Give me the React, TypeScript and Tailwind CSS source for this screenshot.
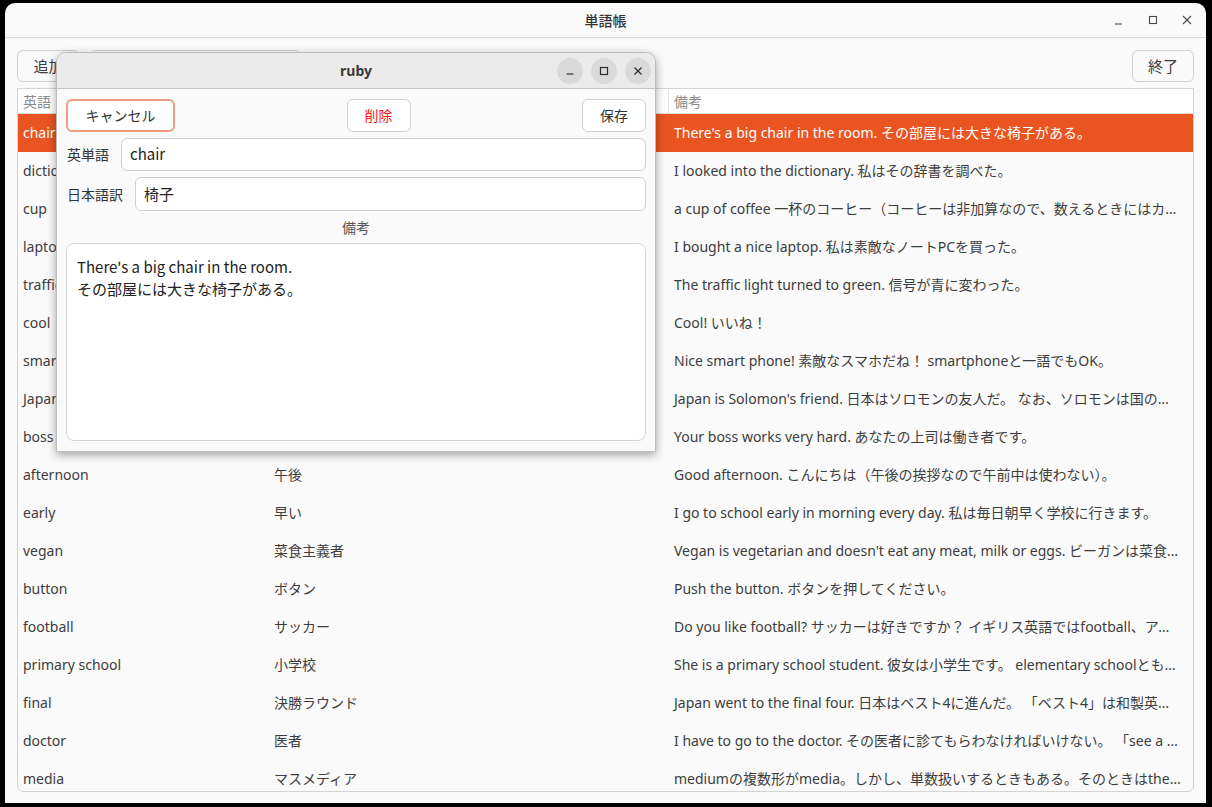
import React from 'react';

const rows: [string, string, string][] = [
  ['chair', '椅子', "There's a big chair in the room. その部屋には大きな椅子がある。"],
  ['dictionary', '辞書', 'I looked into the dictionary. 私はその辞書を調べた。'],
  ['cup', 'カップ', 'a cup of coffee 一杯のコーヒー（コーヒーは非加算なので、数えるときにはカップで数える）'],
  ['laptop', 'ノートPC', 'I bought a nice laptop. 私は素敵なノートPCを買った。'],
  ['traffic light', '信号', 'The traffic light turned to green. 信号が青に変わった。'],
  ['cool', 'かっこいい', 'Cool! いいね！'],
  ['smartphone', 'スマートフォン', 'Nice smart phone! 素敵なスマホだね！ smartphoneと一語でもOK。'],
  ['Japan', '日本', "Japan is Solomon's friend. 日本はソロモンの友人だ。 なお、ソロモンは国の名前でもある。"],
  ['boss', '上司', 'Your boss works very hard. あなたの上司は働き者です。'],
  ['afternoon', '午後', 'Good afternoon. こんにちは（午後の挨拶なので午前中は使わない）。'],
  ['early', '早い', 'I go to school early in morning every day. 私は毎日朝早く学校に行きます。'],
  ['vegan', '菜食主義者', "Vegan is vegetarian and doesn't eat any meat, milk or eggs. ビーガンは菜食主義者で肉も乳製品も食べない。"],
  ['button', 'ボタン', 'Push the button. ボタンを押してください。'],
  ['football', 'サッカー', 'Do you like football? サッカーは好きですか？ イギリス英語ではfootball、アメリカ英語ではsoccer。'],
  ['primary school', '小学校', 'She is a primary school student. 彼女は小学生です。 elementary schoolとも言う。'],
  ['final', '決勝ラウンド', 'Japan went to the final four. 日本はベスト4に進んだ。 「ベスト4」は和製英語。'],
  ['doctor', '医者', 'I have to go to the doctor. その医者に診てもらわなければいけない。 「see a doctor」とも言う。'],
  ['media', 'マスメディア', 'mediumの複数形がmedia。しかし、単数扱いするときもある。そのときはthe mediaとする。'],
];

const font = { fontFamily: '"Noto Sans", "Noto Sans CJK JP", sans-serif' };
const jpFont = { fontFamily: '"Noto Sans CJK JP", "Noto Sans", sans-serif' };

export default function App() {
  return (
    <div className="w-[1212px] h-[807px] bg-black relative overflow-hidden" style={font}>
      {/* ─── Main window ─── */}
      <div className="ml-[5px] mt-[3px] w-[1201px] h-[800px] rounded-t-[10px] bg-[#fafafa] flex flex-col text-[#3d3d3d]">
        <div className="h-[35px] shrink-0 border-b border-[#d8d8d8] grid grid-cols-[1fr_auto_1fr] items-center">
          <div />
          <div className="text-[14px] font-medium text-[#333]" style={jpFont}>単語帳</div>
          <div className="flex justify-end items-center gap-[18px] pr-[11px]">
            <WinIcon kind="min" />
            <WinIcon kind="max" />
            <WinIcon kind="close" />
          </div>
        </div>

        <div className="flex items-center px-[12px] pt-[12px] gap-[10px]">
          <Btn className="w-[63px]">追加</Btn>
          <div className="w-[211px] h-[32px] rounded-[6px] border border-[#d0d0d0] bg-white" />
          <div className="flex-1" />
          <Btn className="w-[62px]">終了</Btn>
        </div>

        <div className="mx-[12px] mt-[6px] mb-[11px] flex-1 min-h-0 border border-[#d4d4d4] rounded-b-[6px] bg-[#fafafa] overflow-hidden flex flex-col">
          <div className="h-[25px] shrink-0 grid grid-cols-[251px_400px_1fr] bg-white border-b border-[#dcdcdc] text-[14px] text-[#8c8c8c]">
            <div className="px-[5px] flex items-center border-r border-[#e2e2e2]" style={jpFont}>英語</div>
            <div className="px-[5px] flex items-center border-r border-[#e2e2e2]" style={jpFont}>日本語</div>
            <div className="px-[5px] flex items-center" style={jpFont}>備考</div>
          </div>
          {rows.map(([en, ja, note], i) => (
            <div
              key={en}
              className={`h-[38px] shrink-0 grid grid-cols-[251px_400px_1fr] items-center pb-[2px] text-[14px] ${i === 0 ? 'bg-[#e95420] text-white' : ''}`}
            >
              <div className="px-[5px] truncate">{en}</div>
              <div className="px-[5px] truncate">{ja}</div>
              <div className="pl-[5px] pr-[12px] truncate">{note}</div>
            </div>
          ))}
        </div>
      </div>

      {/* ─── Dialog: ruby ─── */}
      <div
        className="absolute left-[56px] top-[52px] w-[600px] h-[400px] rounded-t-[10px] bg-[#fafafa] border border-[#bdbdbd] shadow-[0_3px_10px_rgba(0,0,0,0.35)] flex flex-col text-[#333]"
        style={jpFont}
      >
        <div className="h-[36px] shrink-0 rounded-t-[10px] bg-[#ebebeb] border-b border-[#c4c4c4] grid grid-cols-[1fr_auto_1fr] items-center">
          <div />
          <div className="text-[14px] font-bold text-[#3a3a3a]" style={font}>ruby</div>
          <div className="flex justify-end items-center gap-[8px] pr-[4px]">
            <CircleBtn kind="min" />
            <CircleBtn kind="max" />
            <CircleBtn kind="close" />
          </div>
        </div>

        <div className="flex-1 flex flex-col px-[9px] pt-[10px] pb-[10px]">
          <div className="flex justify-between items-center">
            <button className="w-[109px] h-[33px] rounded-[6px] border-2 border-[#ef9d80] bg-white text-[14px] text-[#333]">キャンセル</button>
            <button className="w-[64px] h-[33px] rounded-[6px] border border-[#d0d0d0] bg-white text-[14px] text-[#ff1a1a]">削除</button>
            <button className="w-[64px] h-[33px] rounded-[6px] border border-[#d0d0d0] bg-white text-[14px] text-[#333]">保存</button>
          </div>

          <div className="flex items-center mt-[6px] gap-[12px]">
            <span className="text-[14px] pl-[1px]">英単語</span>
            <div className="flex-1 h-[33px] rounded-[6px] border border-[#d0d0d0] bg-white px-[8px] flex items-center text-[15px] text-[#222]">chair</div>
          </div>
          <div className="flex items-center mt-[6px] gap-[12px]">
            <span className="text-[14px] pl-[1px]">日本語訳</span>
            <div className="flex-1 h-[34px] rounded-[6px] border border-[#d0d0d0] bg-white px-[8px] flex items-center text-[15px] text-[#222]">椅子</div>
          </div>

          <div className="h-[32px] flex items-center justify-center text-[14px] text-[#555]">備考</div>

          <div className="flex-1 rounded-[8px] border border-[#d4d4d4] bg-white px-[10px] pt-[12px] text-[15px] leading-[22px] text-[#222]">
            <div>There's a big chair in the room.</div>
            <div>その部屋には大きな椅子がある。</div>
          </div>
        </div>
      </div>
    </div>
  );
}

function Btn({ children, className = '' }: { children: React.ReactNode; className?: string }) {
  return (
    <button
      className={`h-[32px] rounded-[6px] border border-[#d0d0d0] bg-[#fafafa] text-[15px] text-[#3d3d3d] ${className}`}
      style={jpFont}
    >
      {children}
    </button>
  );
}

function WinIcon({ kind }: { kind: 'min' | 'max' | 'close' }) {
  return (
    <svg width="16" height="16" viewBox="0 0 16 16" fill="none" stroke="#4a4a4a" strokeWidth="1.1">
      {kind === 'min' && <line x1="4" y1="12" x2="11" y2="12" />}
      {kind === 'max' && <rect x="4.5" y="4.5" width="7" height="7" />}
      {kind === 'close' && (
        <>
          <line x1="4" y1="4" x2="12" y2="12" />
          <line x1="12" y1="4" x2="4" y2="12" />
        </>
      )}
    </svg>
  );
}

function CircleBtn({ kind }: { kind: 'min' | 'max' | 'close' }) {
  return (
    <div className="w-[26px] h-[26px] rounded-full bg-[#dadada] flex items-center justify-center">
      <svg width="12" height="12" viewBox="0 0 12 12" fill="none" stroke="#2e2e2e" strokeWidth="1.2">
        {kind === 'min' && <line x1="2.5" y1="9" x2="9.5" y2="9" />}
        {kind === 'max' && <rect x="2.5" y="2.5" width="7" height="7" />}
        {kind === 'close' && (
          <>
            <line x1="2.5" y1="2.5" x2="9.5" y2="9.5" />
            <line x1="9.5" y1="2.5" x2="2.5" y2="9.5" />
          </>
        )}
      </svg>
    </div>
  );
}
